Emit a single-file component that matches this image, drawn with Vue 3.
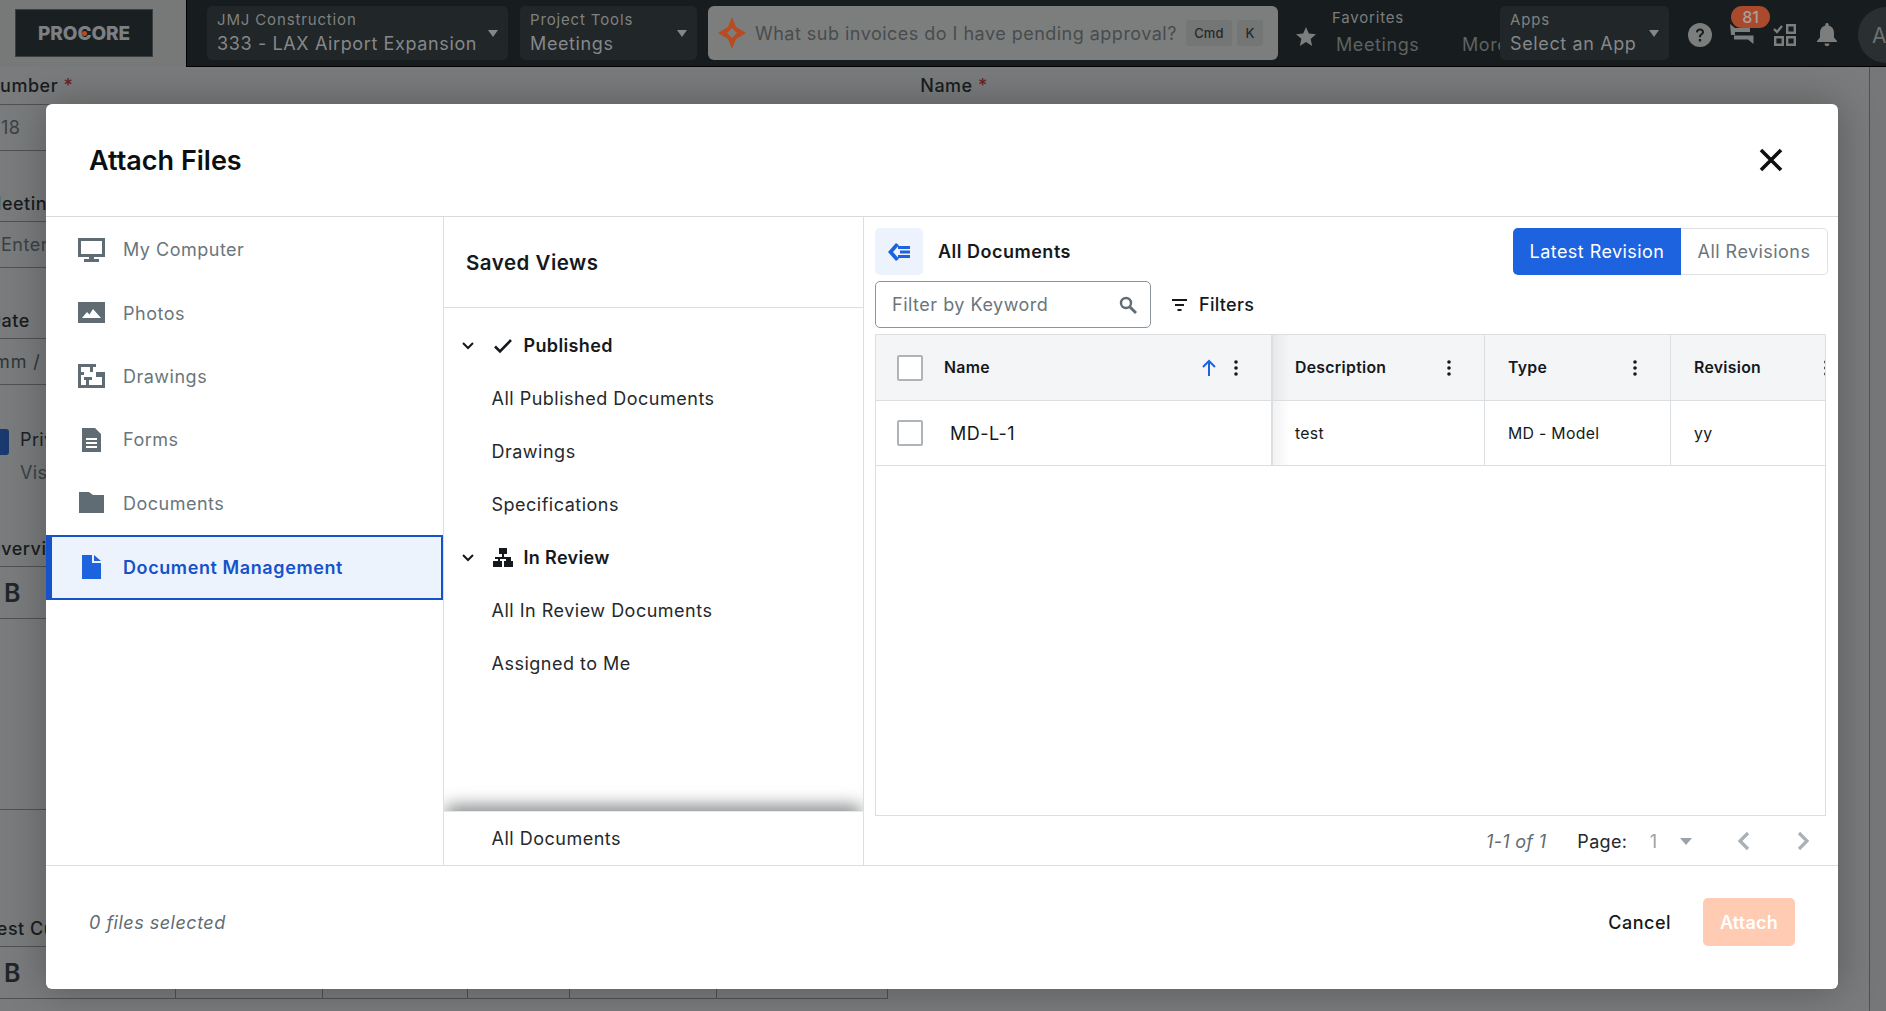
<script setup>
const tree1 = ['All Published Documents', 'Drawings', 'Specifications']
const tree2 = ['All In Review Documents', 'Assigned to Me']
</script>

<template>
  <div class="page">
    <header class="top">
      <div class="logo-area">
        <div class="logo">PRO<span class="logo-c">C</span>ORE</div>
      </div>
      <div class="bar">
        <div class="sel sel-project">
          <div class="sel-text"><small>JMJ Construction</small><span>333 - LAX Airport Expansion</span></div>
          <i class="caret"></i>
        </div>
        <div class="sel sel-tools">
          <div class="sel-text"><small>Project Tools</small><span>Meetings</span></div>
          <i class="caret"></i>
        </div>
        <div class="search">
          <svg class="spark" width="28" height="32" viewBox="0 0 28 32"><path fill-rule="evenodd" fill="#b84b22" d="M14 0l4 10 10 6-10 6-4 10-4-10-10-6 10-6zM14 11l-5 5 5 5 5-5z"/></svg>
          <span class="search-text">What sub invoices do I have pending approval?</span>
          <kbd class="kbd-cmd">Cmd</kbd><kbd class="kbd-k">K</kbd>
        </div>
        <svg class="star" width="20" height="20" viewBox="0 0 20 20"><path fill="#7c7e7d" d="M10 0l2.8 6.6 7.2.6-5.4 4.7 1.6 7.1L10 15l-6.2 3.9 1.6-7.1L0 7.200l7.200-.6z"/></svg>
        <div class="favs">
          <small>Favorites</small>
          <span>Meetings</span>
        </div>
        <div class="more">More</div>
        <div class="sel sel-apps">
          <div class="sel-text"><small>Apps</small><span>Select an App</span></div>
          <i class="caret"></i>
        </div>
        <svg class="help" width="24" height="24" viewBox="0 0 24 24"><circle cx="12" cy="12" r="12" fill="#7c7e7d"/><path d="M8 9.200c0-2.400 1.800-3.700 4-3.700s4 1.300 4 3.400c0 3-3.100 2.800-3.100 5.300h-2c0-3.400 3-3.300 3-5.200 0-.9-.8-1.500-1.900-1.500s-2 .7-2 1.900zM10.800 16h2.300v2.400h-2.300z" fill="#171c1e"/></svg>
        <div class="chat">
          <svg width="24" height="20" viewBox="0 0 24 20"><path fill="#7c7e7d" d="M0 0l5 4h15v4H5v3H1zM4 11.500h19.500V20L18 15.500H4z"/></svg>
          <b class="badge">81</b>
        </div>
        <svg class="tasks" width="24" height="24" viewBox="0 0 24 24"><path fill="none" stroke="#7c7e7d" stroke-width="2.400" d="M1 6l3 3 5-6"/><path fill="none" stroke="#7c7e7d" stroke-width="2.400" d="M14.200 2.200h7.600v7.600h-7.600zM2.200 14.200h7.600v7.600H2.200zM14.200 14.200h7.600v7.600h-7.600z"/></svg>
        <svg class="bell" width="20" height="24" viewBox="0 0 20 24"><path fill="#7c7e7d" d="M10 0c1 0 1.700.7 1.700 1.700v.7C15 3.300 17 6 17 9.500v5l3 3.500v1H0v-1l3-3.500v-5c0-3.500 2-6.200 5.300-7.100v-.7C8.300.7 9 0 10 0zM7.500 20.500h5c0 1.500-1.100 2.700-2.500 2.700s-2.500-1.200-2.500-2.700z"/></svg>
        <div class="avatar">A</div>
      </div>
    </header>

    <main class="behind">
      <div class="form">
        <div class="f f-a"><span class="lbl l-number">Number <em>*</em></span><span class="lbl l-name">Name <em>*</em></span></div>
        <div class="f f-b"><span class="ph">18</span></div>
        <div class="f f-c"><span class="lbl l-meet">Meeting</span></div>
        <div class="f f-d"><span class="ph">Enter</span></div>
        <div class="f f-c"><span class="lbl l-date">Date</span></div>
        <div class="f f-d"><span class="ph ph-date">mm / dd</span></div>
        <div class="f f-e">
          <div class="priv"><i class="priv-box"></i><div><span class="priv-t">Private</span><span class="priv-s">Visible</span></div></div>
          <span class="lbl l-over">Overview</span>
        </div>
        <div class="f f-f"><b class="bold-b">B</b></div>
        <div class="f f-g"></div>
        <div class="f f-h"><span class="lbl l-lat">Latest Cu</span></div>
        <div class="f f-i"><b class="bold-b">B</b><i class="c1"></i><i class="c2"></i><i class="c3"></i><i class="c4"></i><i class="c5"></i></div>
      </div>
      <div class="rail"></div>
    </main>

    <div class="overlay">
      <section class="modal">
        <header class="m-head">
          <h1>Attach Files</h1>
          <svg width="24" height="24" viewBox="0 0 24 24"><path d="M2 2l20 20M22 2L2 22" stroke="#0d0f10" stroke-width="3.600" fill="none"/></svg>
        </header>

        <div class="m-body">
          <nav class="sources">
            <div class="src">
              <svg width="27" height="24" viewBox="0 0 27 24"><path fill="#5f6c74" d="M0 0h27v19H16v2h5v3H6v-3h5v-2H0zM3 3v13h21V3z"/></svg>
              <span>My Computer</span>
            </div>
            <div class="src">
              <svg width="27" height="22" viewBox="0 0 27 22"><path fill="#5f6c74" d="M0 0h27v21H0z"/><path fill="#fff" d="M4 16l5-6 2.500 2.500L15 7l8 9z"/></svg>
              <span>Photos</span>
            </div>
            <div class="src">
              <svg width="27" height="24" viewBox="0 0 27 24"><path fill="#5f6c74" fill-rule="evenodd" d="M0 0h18v8h9v16H0zM3 3v5h3v3H3v10h5v-5H6v-3h8v3h-3v5h13v-8h-6V3h-3v5h-3V3z"/></svg>
              <span>Drawings</span>
            </div>
            <div class="src">
              <svg width="27" height="24" viewBox="0 0 27 24"><path fill="#5f6c74" fill-rule="evenodd" d="M4 0h13l6 6v18H4zM8 10v2h11v-2zM8 14v2h11v-2zM8 18v2h11v-2z"/></svg>
              <span>Forms</span>
            </div>
            <div class="src">
              <svg width="27" height="22" viewBox="0 0 27 22"><path fill="#5f6c74" d="M1 0h10l4 3h11v18H1z"/></svg>
              <span>Documents</span>
            </div>
            <div class="src active">
              <svg width="27" height="24" viewBox="0 0 27 24"><path fill="#1d62de" fill-rule="evenodd" d="M4 0h10v8h9v16H4zM16 0l7 6h-7z"/></svg>
              <span>Document Management</span>
            </div>
          </nav>

          <aside class="views">
            <h2>Saved Views</h2>
            <div class="tree">
              <div class="t-head">
                <svg class="chev" width="12" height="8" viewBox="0 0 12 8"><path d="M1 1l5 5 5-5" fill="none" stroke="#15191c" stroke-width="2"/></svg>
                <svg class="t-ico" width="20" height="16" viewBox="0 0 20 16"><path d="M2 8.500l5 5L18 2" fill="none" stroke="#15191c" stroke-width="2.600"/></svg>
                <span>Published</span>
              </div>
              <div v-for="t in tree1" :key="t" class="t-item">{{ t }}</div>
              <div class="t-head">
                <svg class="chev" width="12" height="8" viewBox="0 0 12 8"><path d="M1 1l5 5 5-5" fill="none" stroke="#15191c" stroke-width="2"/></svg>
                <svg class="t-ico" width="20" height="19" viewBox="0 0 20 19"><path fill="#15191c" d="M6 0h8v6h-3v3h7v4h2v6h-9v-6h2v-2H7v2h2v6H0v-6h5v-2H2v-2h7V6H6z"/></svg>
                <span>In Review</span>
              </div>
              <div v-for="t in tree2" :key="t" class="t-item">{{ t }}</div>
            </div>
            <div class="all-docs">All Documents</div>
          </aside>

          <div class="docs">
            <div class="d-top">
              <button class="back">
                <svg width="24" height="18" viewBox="0 0 24 18"><path fill="#1d62de" d="M9 0l3 2.200L6 9l6 6.800L9 18 1 9zM11 3h12v3H11zM13 7.500h10v3H13zM11 12h12v3H11z"/></svg>
              </button>
              <span class="d-title">All Documents</span>
              <div class="toggle">
                <span class="t-on">Latest Revision</span>
                <span class="t-off">All Revisions</span>
              </div>
            </div>
            <div class="d-filter">
              <div class="kw">
                <span>Filter by Keyword</span>
                <svg width="18" height="18" viewBox="0 0 18 18"><circle cx="7" cy="7" r="5" fill="none" stroke="#5f6c74" stroke-width="2.400"/><path d="M11 11l6 6" stroke="#5f6c74" stroke-width="2.800"/></svg>
              </div>
              <div class="filters">
                <svg width="16" height="12" viewBox="0 0 16 12"><path fill="#15191c" d="M0 0h15v2H0zM3 5h9v2H3zM5.500 10h4v2h-4z"/></svg>
                <span>Filters</span>
              </div>
            </div>

            <div class="table">
              <div class="row head">
                <div class="cell c-name">
                  <i class="check"></i>
                  <span class="th-name">Name</span>
                  <svg class="arrow" width="16" height="17" viewBox="0 0 16 17"><path d="M8 17V2M2 8l6-6 6 6" fill="none" stroke="#1d62de" stroke-width="2"/></svg>
                  <svg class="dots" width="4" height="16" viewBox="0 0 4 16"><circle cx="2" cy="2" r="1.800"/><circle cx="2" cy="8" r="1.800"/><circle cx="2" cy="14" r="1.800"/></svg>
                </div>
                <div class="cell c-desc shade"><span>Description</span><svg class="dots" width="4" height="16" viewBox="0 0 4 16"><circle cx="2" cy="2" r="1.800"/><circle cx="2" cy="8" r="1.800"/><circle cx="2" cy="14" r="1.800"/></svg></div>
                <div class="cell c-type"><span>Type</span><svg class="dots" width="4" height="16" viewBox="0 0 4 16"><circle cx="2" cy="2" r="1.800"/><circle cx="2" cy="8" r="1.800"/><circle cx="2" cy="14" r="1.800"/></svg></div>
                <div class="cell c-rev"><span>Revision</span><svg class="dots" width="4" height="16" viewBox="0 0 4 16"><circle cx="2" cy="2" r="1.800"/><circle cx="2" cy="8" r="1.800"/><circle cx="2" cy="14" r="1.800"/></svg></div>
              </div>
              <div class="row data">
                <div class="cell c-name"><i class="check"></i><span class="td-name">MD-L-1</span></div>
                <div class="cell c-desc shade">test</div>
                <div class="cell c-type plain">MD - Model</div>
                <div class="cell c-rev plain">yy</div>
              </div>
            </div>

            <div class="pager">
              <em>1-1 of 1</em>
              <span class="p-label">Page:</span>
              <span class="p-num">1</span>
              <i class="p-caret"></i>
              <svg class="p-prev" width="13" height="20" viewBox="0 0 13 20"><path d="M11 2L3 10l8 8" fill="none" stroke="#aab1b5" stroke-width="3.200"/></svg>
              <svg class="p-next" width="13" height="20" viewBox="0 0 13 20"><path d="M2 2l8 8-8 8" fill="none" stroke="#aab1b5" stroke-width="3.200"/></svg>
            </div>
          </div>
        </div>

        <footer class="m-foot">
          <em>0 files selected</em>
          <span class="cancel">Cancel</span>
          <button class="attach">Attach</button>
        </footer>
      </section>
    </div>
  </div>
</template>

<style>
html, body { margin: 0; padding: 0; overflow: hidden; }
</style>

<style scoped>
* { box-sizing: border-box; }
.page {
  position: relative;
  width: 1886px;
  height: 1011px;
  overflow: hidden;
  background: #fff;
  font-family: Inter, "Liberation Sans", sans-serif;
  color: #15191c;
  display: flex;
  flex-direction: column;
}

/* top bar */
.top { position: relative; z-index: 3; display: flex; height: 67px; flex: none; }
.logo-area { width: 186px; background: #777978; padding: 9px 0 0 15px; flex: none; }
.logo {
  width: 138px; height: 48px; background: #1a2022; border: 1px solid #3a3f41;
  display: flex; align-items: center; justify-content: center;
  color: #7c8082; font-weight: 800; font-size: 19px; letter-spacing: -.1px;
}
.logo-c { position: relative; }
.logo-c::after {
  content: ""; position: absolute; left: 4.500px; top: 9px; width: 5px; height: 5px;
  border-radius: 50%; background: #b84b22;
}
.bar {
  flex: 1; background: #171c1e; display: flex; align-items: flex-start; position: relative;
  border-bottom: 1px solid #000; border-left: 1px solid #000; padding: 6px 0 0 20px;
  overflow: hidden; color: #7f8180;
}
.sel { height: 54px; background: #212628; border-radius: 5px; display: flex; align-items: center; padding: 0 10px; flex: none; }
.sel-text { flex: 1; display: flex; flex-direction: column; gap: 2px; margin-top: -1px; min-width: 0; white-space: nowrap; }
.sel-text small { font-size: 15px; letter-spacing: .85px; line-height: 20px; color: #7f8180; }
.sel-text span { font-size: 18px; letter-spacing: .62px; line-height: 24px; color: #85888a; }
.caret { width: 0; height: 0; border: 5.500px solid transparent; border-top: 7px solid #85888a; border-bottom: 0; margin-top: 0; flex: none; }
.sel-project { width: 301px; }
.sel-tools { width: 177px; margin-left: 12px; }
.search {
  width: 570px; height: 54px; margin-left: 11px; background: #7c7e7d; border-radius: 6px;
  display: flex; align-items: center; padding-left: 10px; color: #474c4f; flex: none;
}
.spark { flex: none; }
.search-text { margin-left: 9px; font-size: 18px; letter-spacing: .48px; white-space: nowrap; }
kbd { font-family: inherit; background: #747675; border-radius: 3px; height: 26px; display: flex; align-items: center; justify-content: center; font-size: 13px; font-weight: 500; color: #25292b; }
.kbd-cmd { width: 46px; margin-left: 9px; }
.kbd-k { width: 26px; margin-left: 5px; }
.star { margin: 21px 0 0 18px; flex: none; }
.favs { position: relative; margin-left: 16px; width: 131px; display: flex; flex-direction: column; flex: none; }
.favs small { font-size: 15px; letter-spacing: .8px; line-height: 20px; margin-top: 2px; color: #7c7e7d; }
.favs span { font-size: 18px; letter-spacing: .6px; line-height: 24px; margin: 5px 0 0 4px; color: #5f6261; }
.more { width: 38px; overflow: hidden; font-size: 18px; letter-spacing: .6px; margin-top: 27px; margin-left: -1px; color: #5f6261; flex: none; line-height: 24px; }
.sel-apps { width: 169px; }
.help { margin: 17px 0 0 19px; flex: none; }
.chat { position: relative; margin: 18px 0 0 18px; width: 24px; flex: none; }
.chat svg { display: block; }
.badge {
  position: absolute; left: 1px; top: -18px; width: 39px; height: 22px; border-radius: 11px;
  background: #a84a2b; color: #a8a09b; font-size: 16px; font-weight: 500; text-align: center; line-height: 22px;
}
.tasks { margin: 17px 0 0 19px; flex: none; }
.bell { margin: 17px 0 0 20px; flex: none; }
.avatar {
  margin: 1px 0 0 21px; width: 56px; height: 56px; border-radius: 50%; background: #2a3032; flex: none;
  display: flex; align-items: center; padding-left: 14px; font-size: 21px; color: #6f7170;
}

/* page behind the overlay */
.behind { flex: 1; display: flex; justify-content: space-between; min-height: 0; }
.form { flex: none; width: 888px; display: flex; flex-direction: column; }
.rail { flex: none; width: 17px; border-left: 1px solid #9aa0a3; background: #f6f6f6; }
.f { flex: none; border-bottom: 1px solid #9a9ea1; position: relative; white-space: nowrap; overflow: visible; font-size: 18px; display: flex; align-items: center; }
.lbl { font-weight: 500; font-size: 18px; color: #1a1e21; letter-spacing: .5px; }
.lbl em { font-style: normal; color: #d32f2f; }
.f-a { height: 37px; border: 0; align-items: flex-start; padding-top: 8px; }
.l-number { margin-left: -14px; }
.l-name { margin-left: 847px; }
.f-b { height: 47px; border-top: 1px solid #9a9ea1; }
.f-c { height: 71px; align-items: flex-end; padding-bottom: 7px; }
.f-d { height: 46px; }
.ph { color: #6a767c; letter-spacing: .5px; margin-left: 1px; }
.ph-date { color: #50585d; margin-left: -6px; letter-spacing: .9px; }
.l-meet { margin-left: -15px; }
.l-date { margin-left: -12px; }
.f-e { height: 182px; align-items: flex-end; padding-bottom: 7px; }
.priv { position: absolute; left: -17px; top: 44px; display: flex; gap: 11px; }
.priv-box { width: 26px; height: 26px; border-radius: 3px; background: #1d62de; margin-top: 0; }
.priv div { display: flex; flex-direction: column; gap: 11px; }
.priv-t { font-size: 18px; line-height: 22px; color: #25292b; letter-spacing: .4px; }
.priv-s { font-size: 18px; line-height: 22px; color: #6a767c; letter-spacing: .4px; }
.l-over { margin-left: -13px; }
.f-f { height: 52px; }
.bold-b { margin-left: 4px; font-size: 25px; font-weight: 600; color: #2a3238; }
.f-g { height: 191px; }
.f-h { height: 137px; align-items: flex-end; padding-bottom: 7px; }
.l-lat { margin-left: -31px; }
.f-i { height: 52px; border-right: 1px solid #9a9ea1; }
.f-i i { position: absolute; top: 0; bottom: 0; width: 1px; background: #9a9ea1; }
.c1 { left: 175px; } .c2 { left: 322px; } .c3 { left: 467px; } .c4 { left: 569px; } .c5 { left: 716px; }

/* overlay & modal */
.overlay {
  position: absolute; inset: 0; z-index: 2; background: rgba(24, 28, 30, .58);
  padding: 104px 48px 22px 46px; display: flex;
}
.modal {
  flex: 1; background: #fff; border-radius: 6px; display: flex; flex-direction: column;
  box-shadow: 0 0 40px rgba(0, 0, 0, .28); overflow: hidden;
}
.m-head {
  height: 113px; flex: none; border-bottom: 1px solid #d6dadd;
  display: flex; align-items: center; justify-content: space-between; padding: 0 55px 0 43px;
}
h1 { margin: 0; font-size: 27px; font-weight: 600; color: #0c0f10; letter-spacing: 0; }
.m-body { flex: 1; display: flex; min-height: 0; }
.sources { width: 398px; flex: none; border-right: 1px solid #dcdfe2; padding-top: 1px; }
.src { height: 63.400px; display: flex; align-items: center; padding-left: 32px; font-size: 18px; letter-spacing: .5px; color: #6a767c; }
.src svg { flex: none; }
.src span { margin-left: 18px; }
.active {
  height: 65px; background: #edf3fd; color: #1652c9; font-weight: 600; letter-spacing: .6px;
  border: 2px solid #1652c9; border-left: 6px solid #1652c9; padding-left: 26px;
}

.views { width: 420px; flex: none; border-right: 1px solid #dcdfe2; display: flex; flex-direction: column; }
h2 { margin: 0; height: 91px; flex: none; padding: 0 0 0 22px; display: flex; align-items: center; font-size: 20.500px; font-weight: 600; color: #15191c; border-bottom: 1px solid #dcdfe2; letter-spacing: .5px; }
.tree { flex: 1; position: relative; overflow: hidden; padding-top: 11px; font-size: 18px; letter-spacing: .5px; }
.tree::after {
  content: ""; position: absolute; left: 2px; right: 2px; bottom: -12px; height: 16px;
  background: #6b6e70; filter: blur(9px);
}
.t-head { height: 53px; display: flex; align-items: center; font-weight: 600; padding-left: 18px; letter-spacing: .35px; }
.chev { flex: none; }
.t-ico { margin-left: 19px; flex: none; }
.t-head span { margin-left: 10.500px; }
.t-item { height: 53px; display: flex; align-items: center; padding-left: 47.500px; color: #25292b; }
.all-docs { height: 54px; flex: none; border-top: 1px solid #e6e8ea; display: flex; align-items: center; padding-left: 47.500px; font-size: 18px; letter-spacing: .5px; color: #25292b; }

.docs { flex: 1; padding: 11px 10px 0 11px; display: flex; flex-direction: column; min-width: 0; }
.d-top { height: 47px; display: flex; align-items: center; flex: none; }
.back { width: 48px; height: 47px; border: 0; border-radius: 5px; background: #edf3fd; padding: 0; display: flex; align-items: center; justify-content: center; }
.d-title { margin-left: 15px; font-size: 18px; font-weight: 600; letter-spacing: .5px; }
.toggle { margin-left: auto; display: flex; height: 47px; font-size: 18px; letter-spacing: .45px; }
.t-on { width: 168px; background: #1d62de; color: #fff; border-radius: 5px 0 0 5px; display: flex; align-items: center; justify-content: center; font-weight: 400; }
.t-off { width: 147px; border: 1px solid #dfe2e5; border-left: 0; border-radius: 0 5px 5px 0; color: #6a767c; display: flex; align-items: center; justify-content: center; }
.d-filter { margin-top: 6px; height: 47px; display: flex; align-items: center; flex: none; }
.kw { width: 276px; height: 47px; border: 1px solid #8b969c; border-radius: 5px; display: flex; align-items: center; justify-content: space-between; padding: 0 13px 0 16px; color: #6a767c; font-size: 18px; letter-spacing: .5px; }
.filters { margin-left: 21px; display: flex; align-items: center; gap: 11px; font-size: 18px; font-weight: 500; letter-spacing: .3px; }

.table { margin-top: 6px; height: 482px; flex: none; width: 951px; border: 1px solid #dcdfe2; overflow: hidden; }
.row { display: flex; height: 65px; border-bottom: 1px solid #dcdfe2; }
.head { background: #f4f5f7; height: 66px; }
.cell { display: flex; align-items: center; border-right: 1px solid #dcdfe2; flex: none; font-size: 15.800px; letter-spacing: .3px; position: relative; }
.head .cell { font-weight: 600; justify-content: space-between; }
.c-name { width: 397px; padding-left: 21px; border-right: 2px solid #dcdfe2; justify-content: flex-start !important; }
.c-desc { width: 212px; padding: 0 33px 0 22px; }
.c-type { width: 186px; padding: 0 33px 0 23px; }
.c-rev { width: 156px; padding: 0 0 0 23px; border-right: 0; }
.c-rev .dots { margin-right: -1px; }
.shade { background-image: linear-gradient(to right, rgba(0,0,0,.05), rgba(0,0,0,0) 17px); }
.check { width: 26px; height: 26px; border: 2.500px solid #aeb5b9; border-radius: 2px; background: #fff; flex: none; }
.th-name { margin-left: 21px; }
.arrow { margin-left: auto; flex: none; }
.dots { fill: #15191c; flex: none; }
.c-name .dots { margin: 0 33px 0 17px; }
.td-name { margin-left: 27px; font-size: 18px; letter-spacing: .45px; }
.pager { flex: 1; display: flex; align-items: center; padding-top: 1px; font-size: 18px; letter-spacing: .3px; }
.pager em { margin-left: 611px; color: #5f6c74; }
.p-label { margin-left: 31px; color: #25292b; }
.p-num { margin-left: 22.500px; color: #9aa3a8; }
.p-caret { margin-left: 22.500px; width: 0; height: 0; border: 6px solid transparent; border-top: 7px solid #9aa3a8; border-bottom: 0; }
.p-prev { margin-left: 45px; flex: none; }
.p-next { margin-left: 47px; flex: none; }

.m-foot { height: 124px; flex: none; border-top: 1px solid #dcdfe2; display: flex; align-items: center; padding: 0 43px 11px; font-size: 18px; letter-spacing: .5px; }
.m-foot em { color: #5f6c74; }
.cancel { margin-left: auto; font-weight: 500; color: #15191c; }
.attach { margin-left: 32px; width: 92px; height: 48px; border: 0; border-radius: 5px; background: #ffcbb3; color: #fff; font: 600 18px Inter, "Liberation Sans", sans-serif; letter-spacing: .25px; padding: 0; }
</style>
